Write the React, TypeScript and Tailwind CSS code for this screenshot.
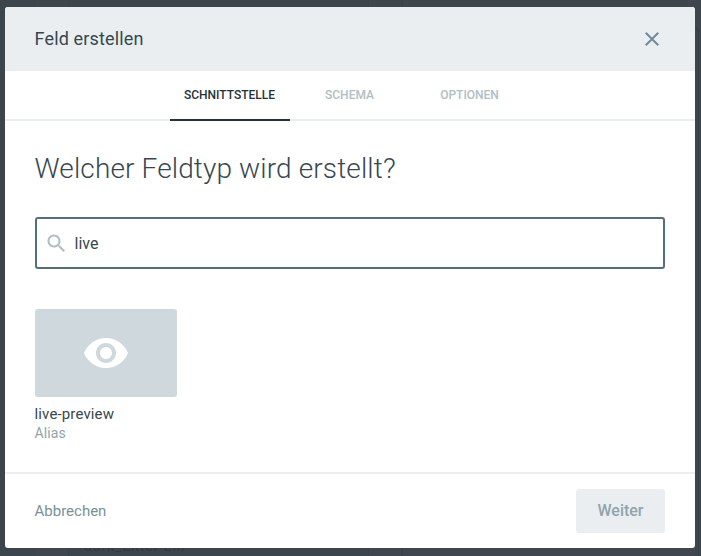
import React from "react";

const tabs = ["Schnittstelle", "Schema", "Optionen"];

function Backdrop() {
  return (
    <div aria-hidden="true" className="absolute inset-0 flex overflow-hidden bg-[#3e454c]">
      <div className="w-9 bg-[#3b454b]" />
      <div className="w-8 bg-[#3f464d]" />
      <div className="flex w-[300px] items-end border-l border-[#394248] bg-[#3b454b] pl-[15px] text-[14px] leading-4 tracking-[0.9px] text-[#2f3940]">
        <span className="translate-y-[-2px]">dark_Enter Ein</span>
      </div>
      <div className="w-[33px] border-l border-[#394248] bg-[#3f464d]" />
      <div className="flex-1 border-l-2 border-[#394248] bg-[#3f464d]" />
      <div className="mt-7 w-1 rounded-tr-sm border-r border-t border-[#353f45] bg-[#3b464c]" />
      <div className="w-0.5 bg-[#3d464c]" />
    </div>
  );
}

export default function App() {
  return (
    <div className="relative flex h-[556px] w-[701px] px-[5px] pt-[7px] font-[Roboto,sans-serif]">
      <Backdrop />
      <section role="dialog" className="relative flex h-[541px] w-[690px] flex-col overflow-hidden rounded-[3px] bg-white">
        <header className="flex h-16 items-center justify-between bg-[#eaeef1] pl-[29.5px] pr-[31px]">
          <h1 className="text-[18px] leading-6 tracking-[0.16px] text-[#37474f]">Feld erstellen</h1>
          <button aria-label="Schließen" className="text-[#6f8b99]">
            <svg viewBox="0 0 24 24" className="size-6 fill-current">
              <path d="M19 6.41 17.59 5 12 10.59 6.41 5 5 6.41 10.59 12 5 17.59 6.41 19 12 13.41 17.59 19 19 17.59 13.41 12z" />
            </svg>
          </button>
        </header>
        <nav className="flex h-[50px] justify-center border-b-2 border-[#eaeef1]">
          {tabs.map((tab, index) => (
            <button
              key={tab}
              className={
                "h-[50px] w-[120px] border-b-2 pr-px text-[12px] font-medium uppercase leading-4 " +
                (index === 0 ? "border-[#263238] text-[#263238]" : "border-transparent text-[#b0bec5]")
              }
            >
              {tab}
            </button>
          ))}
        </nav>
        <main className="flex-1 px-[30px] pt-[30px]">
          <h2 className="-ml-[0.5px] text-[28px] font-light leading-9 tracking-[0.13px] text-[#37474f]">Welcher Feldtyp wird erstellt?</h2>
          <label className="mt-[30px] flex h-[52px] items-center rounded-[3px] border-2 border-[#546e7a] pl-[7px]">
            <svg viewBox="-0.5 -0.5 24 24" className="size-6 fill-[#b0bec5]">
              <path d="M15.5 14h-.79l-.28-.27C15.41 12.59 16 11.11 16 9.5 16 5.91 13.09 3 9.5 3S3 5.91 3 9.5 5.91 16 9.5 16c1.61 0 3.09-.59 4.23-1.57l.27.28v.79l5 4.99L20.49 19l-4.99-5zm-6 0C7.01 14 5 11.99 5 9.5S7.01 5 9.5 5 14 7.01 14 9.5 11.99 14 9.5 14z" />
            </svg>
            <input className="ml-[6.5px] flex-1 pt-0.5 text-[16px] leading-6 text-[#37474f] outline-none" defaultValue="live" />
          </label>
          <article className="mt-10 w-[142px]">
            <div className="flex h-[88px] items-center justify-center rounded-[3px] bg-[#cfd8dd]">
              <svg viewBox="0 0 24 24" className="size-12 fill-white">
                <path d="M12 4.5C7 4.5 2.73 7.61 1 12c1.73 4.39 6 7.5 11 7.5s9.27-3.11 11-7.5c-1.73-4.39-6-7.5-11-7.5zM12 17c-2.76 0-5-2.24-5-5s2.24-5 5-5 5 2.24 5 5-2.24 5-5 5zm0-8c-1.66 0-3 1.34-3 3s1.34 3 3 3 3-1.34 3-3-1.34-3-3-3z" />
              </svg>
            </div>
            <h3 className="-ml-[0.5px] mt-[7px] text-[15px] leading-5 tracking-[0.14px] text-[#37474f]">live-preview</h3>
            <p className="-ml-[0.5px] text-[14px] leading-[18px] tracking-[0.1px] text-[#90a4ae]">Alias</p>
          </article>
        </main>
        <footer className="flex h-[76px] items-center justify-between border-t-2 border-[#eaeef1] pl-[29.5px] pr-[30px]">
          <button className="text-[15px] leading-5 text-[#78909c]">Abbrechen</button>
          <button className="h-11 w-[89px] rounded-[3px] bg-[#eaeef1] text-[16px] font-medium leading-6 text-[#90a4ae]">Weiter</button>
        </footer>
      </section>
    </div>
  );
}
